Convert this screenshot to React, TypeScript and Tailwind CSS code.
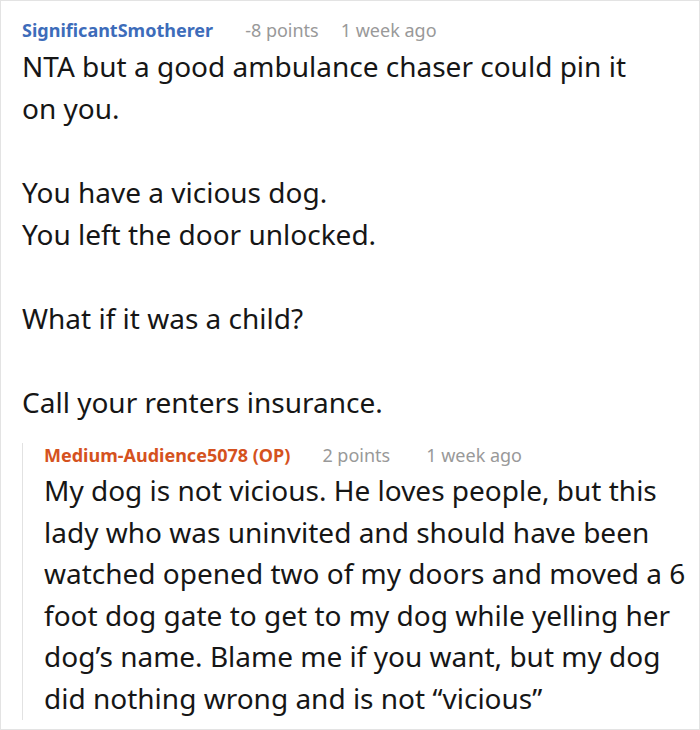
import React from 'react';

const font = { fontFamily: '"Noto Sans", "Open Sans", sans-serif' };

type MetaProps = {
  name: string;
  color: string;
  points: string;
  age: string;
  ageGap: string;
};

function Meta({ name, color, points, age, ageGap }: MetaProps) {
  return (
    <div className="flex items-baseline text-[18px] leading-[24px] whitespace-nowrap">
      <span className={`font-bold ${color}`}>{name}</span>
      <span className="ml-[32px] text-[#999999]">{points}</span>
      <span className={`${ageGap} text-[#999999]`}>{age}</span>
    </div>
  );
}

const reply = [
  'My dog is not vicious. He loves people, but this',
  'lady who was uninvited and should have been',
  'watched opened two of my doors and moved a 6',
  'foot dog gate to get to my dog while yelling her',
  'dog’s name. Blame me if you want, but my dog',
  'did nothing wrong and is not “vicious”',
];

export default function App() {
  return (
    <div className="w-[700px] h-[730px] bg-white border border-[#e3e3e3] pl-[21px] pt-[17px] text-[#161616]" style={font}>
      <Meta name="SignificantSmotherer" color="text-[#3d6cba]" points="-8 points" age="1 week ago" ageGap="ml-[22px]" />
      <div className="text-[28px] leading-[42px] mt-[3px] whitespace-nowrap">
        <p>NTA but a good ambulance chaser could pin it<br />on you.</p>
        <p className="mt-[42px]">You have a vicious dog.</p>
        <p>You left the door unlocked.</p>
        <p className="mt-[42px]">What if it was a child?</p>
        <p className="mt-[42px]">Call your renters insurance.</p>
      </div>

      {/* reply, its rule starts a little below the header top */}
      <div className="mt-[29px] border-l border-[#e2e2e2] pl-[21px]">
        <div className="-mt-[9px]">
          <Meta name="Medium-Audience5078 (OP)" color="text-[#d5521e]" points="2 points" age="1 week ago" ageGap="ml-[36px]" />
        </div>
        <p className="text-[28px] leading-[41.6px] mt-[3px] -mb-[9px] whitespace-nowrap">
          {reply.map((line, i) => (
            <React.Fragment key={i}>
              {line}
              {i < reply.length - 1 && <br />}
            </React.Fragment>
          ))}
        </p>
      </div>
    </div>
  );
}
